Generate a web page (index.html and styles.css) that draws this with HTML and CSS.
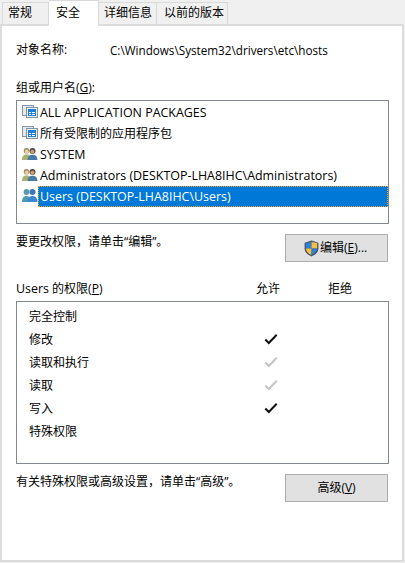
FILE: index.html
```html
<!DOCTYPE html>
<html lang="zh-CN">
<head>
<meta charset="utf-8">
<title>hosts 属性</title>
<link rel="stylesheet" href="styles.css">
</head>
<body>
<div class="dialog">
  <div class="tabs">
    <div class="tab tab-general">常规</div>
    <div class="tab tab-active">安全</div>
    <div class="tab tab-details">详细信息</div>
    <div class="tab tab-versions">以前的版本</div>
  </div>
  <div class="panel">
    <div class="object-row">
      <span class="object-label">对象名称:</span>
      <span class="object-path">C:\Windows\System32\drivers\etc\hosts</span>
    </div>
    <div class="group-label">组或用户名(<u>G</u>):</div>
    <div class="user-list">
      <div class="user-row"><svg class="user-icon" viewBox="0 0 16 17"><use href="#pkg"/></svg><span class="user-name latin">ALL APPLICATION PACKAGES</span></div>
      <div class="user-row"><svg class="user-icon" viewBox="0 0 16 17"><use href="#pkg"/></svg><span class="user-name">所有受限制的应用程序包</span></div>
      <div class="user-row"><svg class="user-icon" viewBox="0 0 16 17"><use href="#people"/></svg><span class="user-name latin">SYSTEM</span></div>
      <div class="user-row"><svg class="user-icon" viewBox="0 0 16 17"><use href="#people"/></svg><span class="user-name latin">Administrators (DESKTOP-LHA8IHC\Administrators)</span></div>
      <div class="user-row"><svg class="user-icon" viewBox="0 0 16 17"><use href="#people-blue"/></svg><span class="user-name latin selected">Users (DESKTOP-LHA8IHC\Users)</span></div>
    </div>
    <div class="action-row edit-row">
      <span>要更改权限&#xFF0C;请单击“编辑”。</span>
      <div class="button button-edit">
        <svg class="shield" viewBox="0 0 14 16">
          <path d="M7 .5 13.500 2.500V8c0 3.600-3 6-6.500 7.500C3.500 14 .5 11.600.5 8V2.500Z" fill="#44546a"/>
          <path d="M7 1.800V8H1.700V2.900Z" fill="#2f7fd6"/>
          <path d="M7 1.800 12.300 2.900V8H7Z" fill="#f5c13d"/>
          <path d="M7 8V14.200C4.300 13 1.900 11 1.700 8Z" fill="#f5c13d"/>
          <path d="M7 8H12.300C12.100 11 9.700 13 7 14.200Z" fill="#2f7fd6"/>
        </svg>
        <span>编辑(<u>E</u>)...</span>
      </div>
    </div>
    <div class="perm-head">
      <span class="perm-title"><span class="latin">Users</span> 的权限(<u>P</u>)</span>
      <span class="perm-allow">允许</span>
      <span class="perm-deny">拒绝</span>
    </div>
    <div class="perm-list">
      <div class="perm-row"><span class="perm-name">完全控制</span></div>
      <div class="perm-row"><span class="perm-name">修改</span><svg class="check" viewBox="0 0 14 12"><use href="#tick"/></svg></div>
      <div class="perm-row"><span class="perm-name">读取和执行</span><svg class="check check-off" viewBox="0 0 14 12"><use href="#tick"/></svg></div>
      <div class="perm-row"><span class="perm-name">读取</span><svg class="check check-off" viewBox="0 0 14 12"><use href="#tick"/></svg></div>
      <div class="perm-row"><span class="perm-name">写入</span><svg class="check" viewBox="0 0 14 12"><use href="#tick"/></svg></div>
      <div class="perm-row"><span class="perm-name">特殊权限</span></div>
    </div>
    <div class="action-row adv-row">
      <span>有关特殊权限或高级设置&#xFF0C;请单击“高级”。</span>
      <div class="button">高级(<u>V</u>)</div>
    </div>
  </div>
</div>
<svg class="defs" aria-hidden="true">
  <defs>
    <symbol id="tick" viewBox="0 0 14 12">
      <path d="M1.300 6.500 4.800 10 12.700 1.700" fill="none" stroke="currentColor" stroke-width="2"/>
    </symbol>
    <symbol id="pkg" viewBox="0 0 16 17">
      <rect x="0.500" y="1.500" width="11" height="10" fill="#e4e9ee" stroke="#8796a6"/>
      <rect x="4.500" y="3.500" width="11" height="10" fill="#eef3f8" stroke="#7f93a8"/>
      <rect x="6" y="5" width="8" height="7" fill="#1f7fd6"/>
      <path d="M7 8.500h2M10 8.500h3M7 10.500h2M10 10.500h3" stroke="#ffffff"/>
    </symbol>
    <symbol id="people" viewBox="0 0 16 17">
      <circle cx="4.500" cy="4.800" r="2.800" fill="#a08c58"/>
      <circle cx="4.700" cy="5.500" r="1.900" fill="#e9cda6"/>
      <path d="M0 14c0-3.800 1.800-5.500 4.500-5.500S9 10.200 9 14Z" fill="#a7b26c"/>
      <circle cx="10.500" cy="5" r="3" fill="#4b4b4d"/>
      <circle cx="10.400" cy="5.800" r="2" fill="#cf9d6e"/>
      <path d="M5.500 14c0-3.500 2-5.200 5-5.200s5 1.700 5 5.200Z" fill="#4a7ba6"/>
    </symbol>
    <symbol id="people-blue" viewBox="0 0 16 17">
      <circle cx="4.500" cy="4" r="2.900" fill="#5c98ad"/>
      <path d="M0 14c0-4 1.800-6 4.500-6S9 10 9 14Z" fill="#4b9bb0"/>
      <circle cx="10.500" cy="4" r="3" fill="#3d78b4"/>
      <path d="M5.500 14c0-4 2-6 5-6s5 2 5 6Z" fill="#3e86d8"/>
    </symbol>
  </defs>
</svg>
</body>
</html>
```
FILE: styles.css
```css
* { box-sizing: border-box; }
html, body { margin: 0; height: 100%; }
body {
  background: #f0f0f0;
  color: #000;
  font: 12px/16px "Open Sans", "Noto Sans CJK SC", sans-serif;
  overflow: hidden;
}
u { text-decoration: underline; text-underline-offset: 1px; }
.latin { font-size: 12.45px; }
.defs { width: 0; height: 0; display: block; }
.dialog { display: flex; flex-direction: column; width: 404px; height: 562px; }
.tabs { display: flex; align-items: flex-end; height: 24px; position: relative; z-index: 1; }
.tab {
  height: 22px;
  padding-top: 1px;
  border-top: 1px solid #d9d9d9;
  border-right: 1px solid #d9d9d9;
  background: #f0f0f0;
  white-space: nowrap;
  line-height: 18px;
}
.tab-general { width: 47px; margin-left: 2px; padding-left: 5px; border-left: 1px solid #d9d9d9; }
.tab-active {
  width: 50px;
  height: 26px;
  margin-bottom: -2px;
  padding: 3px 0 0 7px;
  background: #fff;
}
.tab-details { width: 58px; padding-left: 5px; }
.tab-versions { width: 71px; padding-left: 7px; }
.panel {
  flex: 1;
  background: #fff;
  border: 2px solid #dcdcdc;
  padding: 16px 13px 0 14px;
  display: flex;
  flex-direction: column;
}
.object-row { display: flex; height: 16px; }
.object-label { width: 94px; }
.object-path { font-size: 11.7px; }
.group-label { margin-top: 22px; height: 16px; }
.user-list {
  margin-top: 4px;
  height: 124px;
  border: 1px solid #828790;
  padding: 1px 0 0 5px;
}
.user-row { display: flex; align-items: center; height: 21px; }
.user-icon { width: 16px; height: 17px; flex: none; }
.user-name { padding-left: 2px; }
.selected {
  flex: 1;
  background: #0078d7;
  color: #fff;
  height: 21px;
  line-height: 21px;
  outline: 1px dotted #f5a623;
  outline-offset: -1px;
}
.action-row { display: flex; justify-content: space-between; }
.edit-row { margin-top: 10px; align-items: flex-start; }
.button {
  width: 103px;
  height: 28px;
  margin-right: 1px;
  background: #e1e1e1;
  border: 1px solid #adadad;
  display: flex;
  align-items: center;
  justify-content: center;
}
.button-edit { justify-content: flex-start; padding-left: 18px; }
.shield { width: 15px; height: 17px; margin-right: 1px; }
.perm-head { display: flex; margin-top: 19px; height: 16px; }
.perm-title { width: 240px; }
.perm-allow { width: 72px; }
.perm-list {
  margin-top: 4px;
  height: 163px;
  border: 1px solid #828790;
  padding-top: 3px;
}
.perm-row { display: flex; align-items: center; height: 23px; position: relative; }
.perm-name { margin-left: 12px; }
.check { position: absolute; left: 247px; top: 5px; width: 14px; height: 12px; color: #111; }
.check-off { color: #c4c4c4; }
.adv-row { margin-top: 10px; align-items: flex-start; }
```
